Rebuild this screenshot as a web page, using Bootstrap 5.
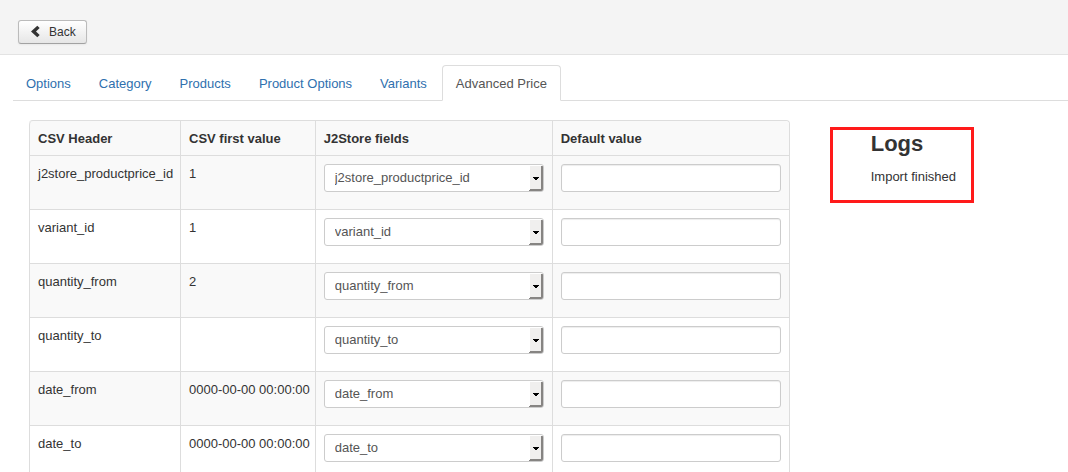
<!DOCTYPE html>
<html lang="en">
<head>
<meta charset="utf-8">
<meta name="viewport" content="width=device-width, initial-scale=1">
<title>Import - Advanced Price</title>
<link href="https://cdn.jsdelivr.net/npm/bootstrap@5.3.0/dist/css/bootstrap.min.css" rel="stylesheet">
<script src="https://cdn.jsdelivr.net/npm/bootstrap@5.3.0/dist/js/bootstrap.bundle.min.js" defer></script>
<style>
body { font: 13px/18px "Liberation Sans", Arial, sans-serif; color: #333; background: #fff; }
.toolbar { background: #f4f4f4; border-bottom: 1px solid #e3e3e3; padding: 20px 18px 10px; }
.btn-back {
  --bs-btn-font-size: 12px; --bs-btn-line-height: 18px;
  --bs-btn-padding-x: 10px; --bs-btn-padding-y: 2px;
  --bs-btn-color: #333; --bs-btn-border-color: #bbb; --bs-btn-border-radius: 3px;
  height: 24px; gap: 6px; background: linear-gradient(#fff, #e6e6e6);
  border-bottom-color: #a2a2a2; box-shadow: 0 1px 2px rgba(0,0,0,.05);
}
.import-tabs { margin: 10px 0 19px 13px; --bs-nav-tabs-border-color: #ddd; gap: 2px; }
.import-tabs .nav-link { padding: 9px 12px 7px; color: #2f70ae; border-radius: 4px 4px 0 0; }
.import-tabs .nav-link.active { padding-left: 13px; padding-right: 13px; color: #555; border-color: #ddd #ddd #fff; }
.import-body { padding: 0 29px; gap: 40px; }
.map-table { border: 1px solid #ddd; border-left: 0; border-radius: 4px; border-collapse: separate; border-spacing: 0; }
.map-table th, .map-table td { padding: 9px 5px 7px 8px; border-left: 1px solid #ddd; vertical-align: top; white-space: nowrap; }
.map-table td { border-top: 1px solid #ddd; }
.map-table td.field { padding: 8px; }
.map-table th { background: #f9f9f9; text-align: left; }
.map-table tbody tr:nth-child(odd) td { background: #f9f9f9; }
.map-table th:first-child { width: 151px; border-top-left-radius: 4px; }
.map-table th:last-child { border-top-right-radius: 4px; }
.map-table .form-control, .map-table .form-select {
  width: 220px; height: 28px; margin-bottom: 9px; padding: 4px 10px;
  font-size: 13px; line-height: 18px; color: #555; border: 1px solid #ccc; border-radius: 3px;
}
.map-table .form-control { box-shadow: inset 0 1px 1px rgba(0,0,0,.075); }
.map-table .form-select {
  background: #fff url("data:image/svg+xml,%3Csvg xmlns='http://www.w3.org/2000/svg' width='14' height='26' shape-rendering='crispEdges'%3E%3Cpath fill='%23f0efee' d='M1 1h13v25H1z'/%3E%3Cpath fill='%23868482' d='M12 1h2v25H0v-1l1-1h11z'/%3E%3Cpath fill='%23000' d='M4 12h6v1h-1v1H8v1H6v-1H5v-1H4z'/%3E%3C/svg%3E") no-repeat right 0 top 0 / 14px 26px;
}
.logs { border: 3px solid #ff1a1a; padding: 4px 15px 14px 38px; margin-top: 7px; }
.logs h3 { font-size: 22px; line-height: 20px; font-weight: 700; margin: 0 0 14px; }
</style>
</head>
<body>
<header class="toolbar">
  <button type="button" class="btn btn-back d-flex align-items-center">
    <svg width="14" height="14" viewBox="0 0 14 14" aria-hidden="true"><path d="M8.3.8 2 6.5l6.3 5.7 2.4-2.3L7 6.5l3.7-3.4z" fill="#333"/></svg>Back
  </button>
</header>
<nav>
  <ul class="nav nav-tabs import-tabs">
    <li class="nav-item"><a class="nav-link" href="#options">Options</a></li>
    <li class="nav-item"><a class="nav-link" href="#category">Category</a></li>
    <li class="nav-item"><a class="nav-link" href="#products">Products</a></li>
    <li class="nav-item"><a class="nav-link" href="#product-options">Product Options</a></li>
    <li class="nav-item"><a class="nav-link" href="#variants">Variants</a></li>
    <li class="nav-item"><a class="nav-link active" aria-current="page" href="#advanced-price">Advanced Price</a></li>
  </ul>
</nav>
<main class="import-body d-flex align-items-start">
  <table class="map-table">
    <thead>
      <tr><th scope="col">CSV Header</th><th scope="col">CSV first value</th><th scope="col">J2Store fields</th><th scope="col">Default value</th></tr>
    </thead>
    <tbody>
      <tr><td>j2store_productprice_id</td><td>1</td><td class="field"><select class="form-select" aria-label="Field for j2store_productprice_id"><option>j2store_productprice_id</option></select></td><td class="field"><input type="text" class="form-control" aria-label="Default for j2store_productprice_id"></td></tr>
      <tr><td>variant_id</td><td>1</td><td class="field"><select class="form-select" aria-label="Field for variant_id"><option>variant_id</option></select></td><td class="field"><input type="text" class="form-control" aria-label="Default for variant_id"></td></tr>
      <tr><td>quantity_from</td><td>2</td><td class="field"><select class="form-select" aria-label="Field for quantity_from"><option>quantity_from</option></select></td><td class="field"><input type="text" class="form-control" aria-label="Default for quantity_from"></td></tr>
      <tr><td>quantity_to</td><td></td><td class="field"><select class="form-select" aria-label="Field for quantity_to"><option>quantity_to</option></select></td><td class="field"><input type="text" class="form-control" aria-label="Default for quantity_to"></td></tr>
      <tr><td>date_from</td><td>0000-00-00 00:00:00</td><td class="field"><select class="form-select" aria-label="Field for date_from"><option>date_from</option></select></td><td class="field"><input type="text" class="form-control" aria-label="Default for date_from"></td></tr>
      <tr><td>date_to</td><td>0000-00-00 00:00:00</td><td class="field"><select class="form-select" aria-label="Field for date_to"><option>date_to</option></select></td><td class="field"><input type="text" class="form-control" aria-label="Default for date_to"></td></tr>
    </tbody>
  </table>
  <section class="logs">
    <h3>Logs</h3>
    <p class="mb-0">Import finished</p>
  </section>
</main>
</body>
</html>
